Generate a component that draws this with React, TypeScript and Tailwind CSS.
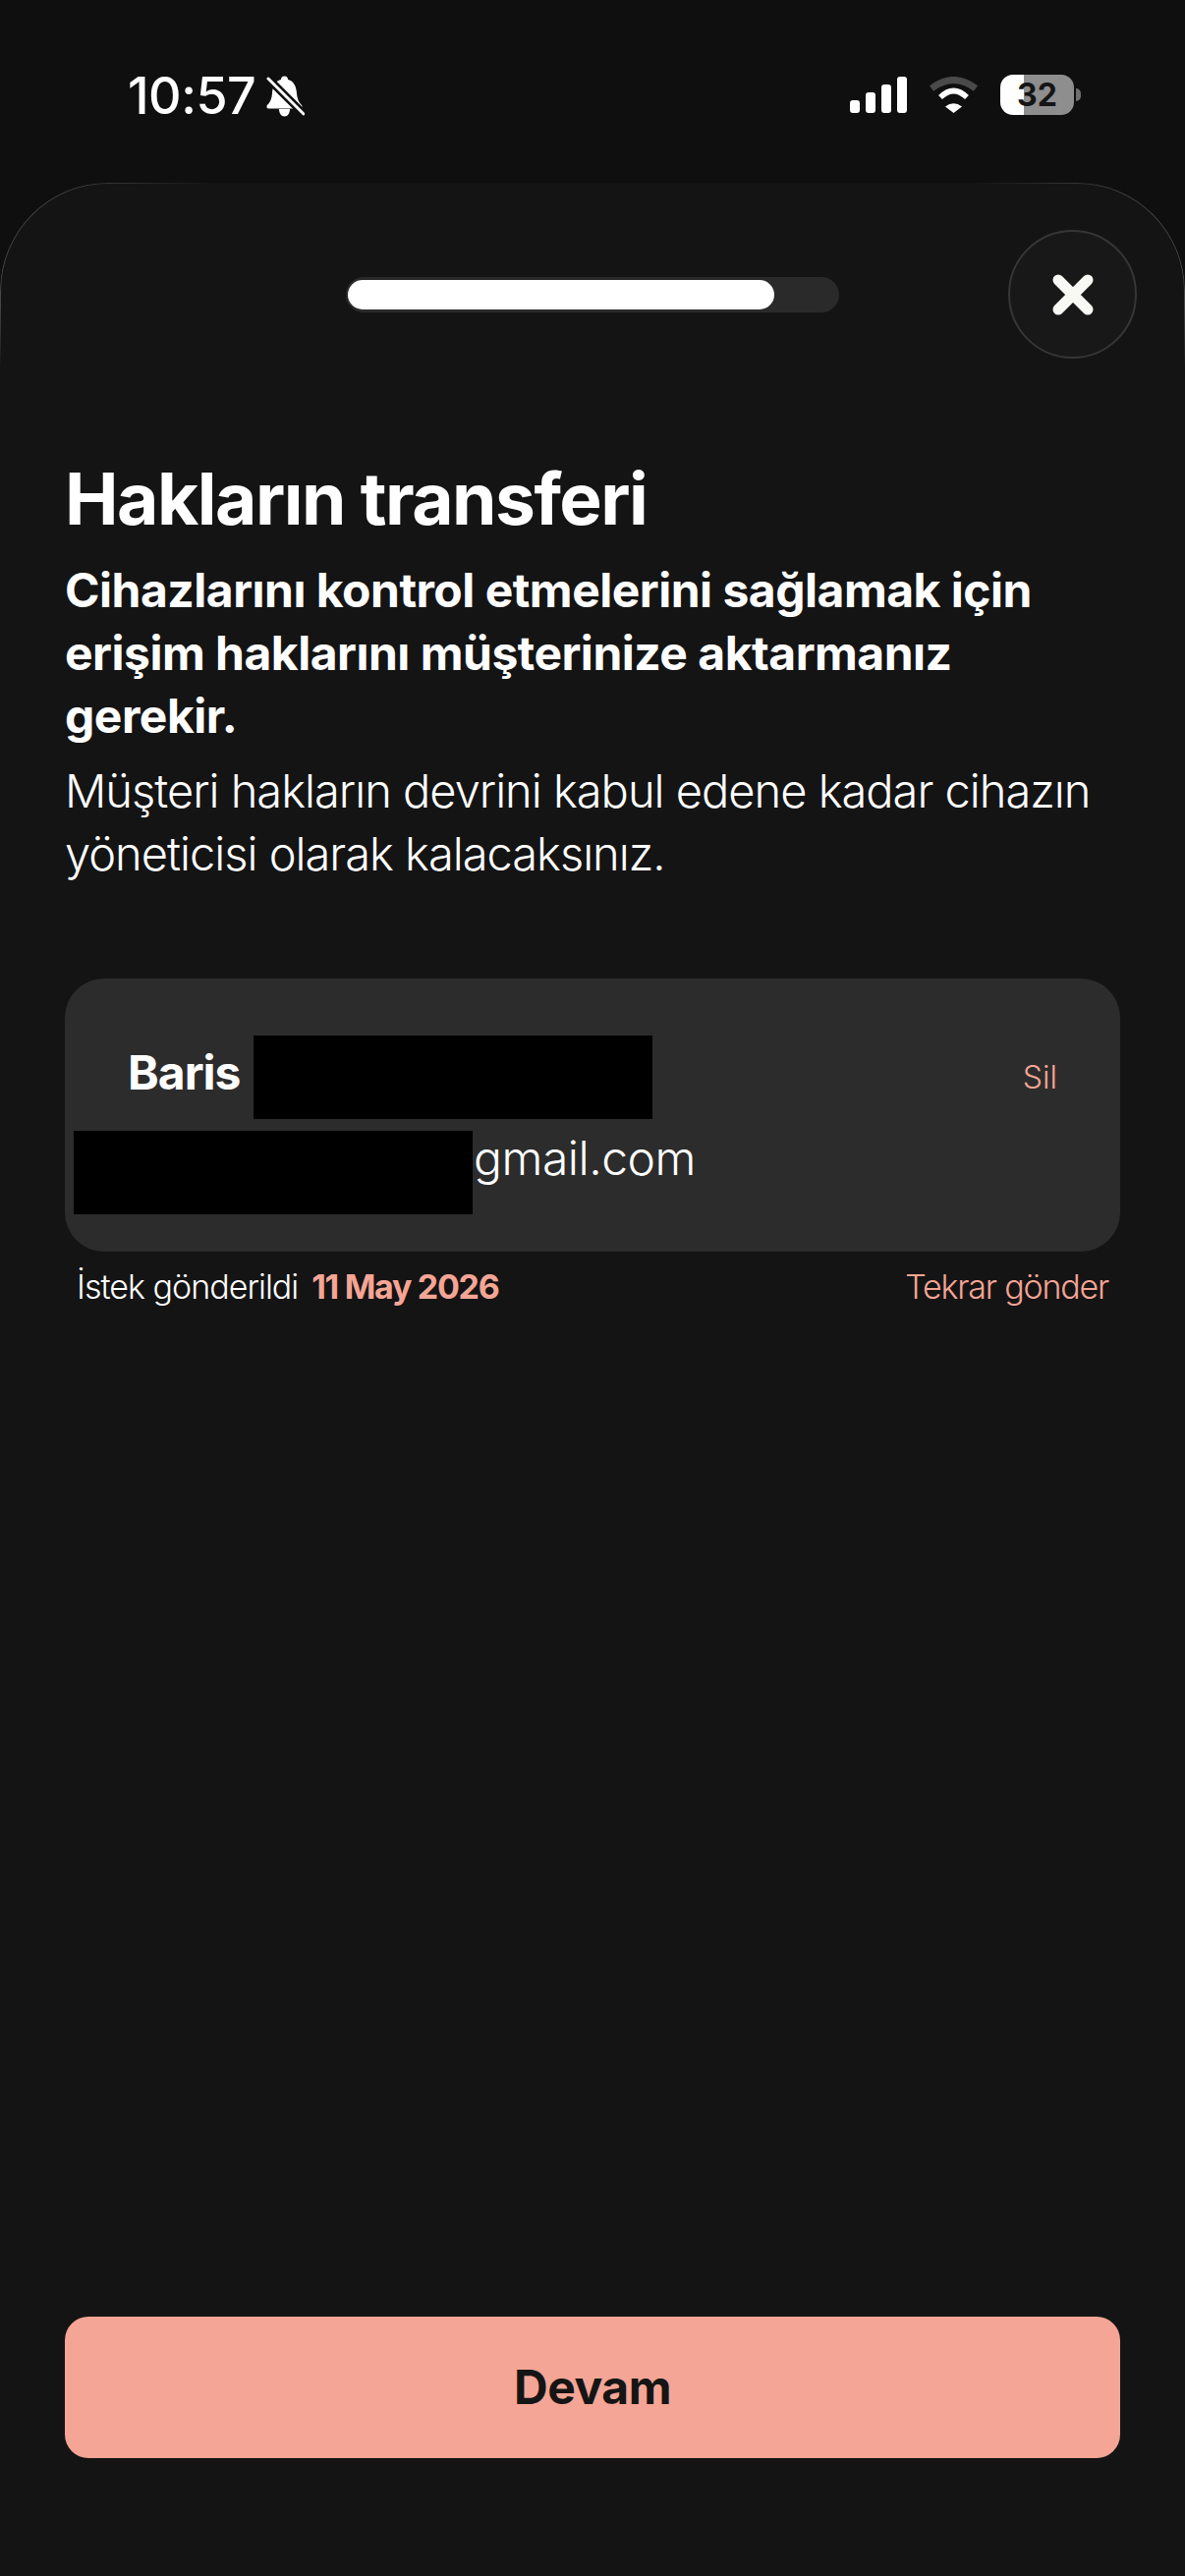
function BellOff() {
  return (
    <svg width="40" height="42" viewBox="0 0 40 42" fill="none">
      <path
        d="M19.5 0.5c2.2 0 3.6 1.6 3.6 3.6C29 5.6 31.5 11 32 18c.4 5.500 2 9 5 12 1.200 1.300.6 3.500-1.500 3.500H3.500C1.400 33.500.8 31.300 2 30c3-3 4.600-6.500 5-12 .5-7 3-12.400 8.900-13.900 0-2 1.400-3.600 3.600-3.600z"
        fill="#fff"
      />
      <path d="M14 34h11c0 4-2 7.500-5.500 7.500S14 38 14 34z" fill="#fff" />
      <path d="M1 1l38 38" stroke="#0f0f0f" strokeWidth="8" />
      <path d="M3 3l36 36" stroke="#fff" strokeWidth="3" strokeLinecap="round" />
    </svg>
  );
}

function SignalBars() {
  return (
    <svg width="58" height="37" viewBox="0 0 58 37" fill="#fff">
      <rect x="0" y="24" width="10" height="13" rx="3" />
      <rect x="16" y="16" width="10" height="21" rx="3" />
      <rect x="32" y="8" width="10" height="29" rx="3" />
      <rect x="48" y="0" width="10" height="37" rx="3" />
    </svg>
  );
}

function Wifi() {
  return (
    <svg width="51" height="37" viewBox="0 0 51 37" fill="none">
      <path d="M3 12Q25.500 -5 48 12" stroke="#4a4a4a" strokeWidth="7" />
      <path d="M12 21Q25.500 8 39 21" stroke="#fff" strokeWidth="5.500" />
      <path d="M17 30.500Q25.500 24 34 30.500L25.500 37z" fill="#fff" />
    </svg>
  );
}

function Battery() {
  return (
    <div className="flex items-center gap-[2px]">
      <div className="flex h-[41px] w-[75px] items-center justify-center rounded-[13px] bg-[linear-gradient(to_right,#ffffff_32%,#8e8e8e_32%)]">
        <span className="font-['Inter',sans-serif] text-[32px] leading-none font-bold text-[#151515]">32</span>
      </div>
      <div className="h-[13px] w-[5px] rounded-r-full bg-[#6f6f6f]" />
    </div>
  );
}

export default function App() {
  return (
    <div className="flex h-[2622px] w-[1206px] flex-col overflow-hidden bg-[#0f0f0f] font-['Inter',sans-serif] text-white">
      {/* status bar */}
      <div className="flex h-[186px] shrink-0 items-start justify-between pt-[76px] pr-[106px] pl-[130px]">
        <div className="flex items-center gap-[10px]">
          <span className="text-[52px] leading-[44px] font-medium tracking-[-0.5px]">10:57</span>
          <BellOff />
        </div>
        <div className="flex items-center gap-[22px]">
          <SignalBars />
          <Wifi />
          <Battery />
        </div>
      </div>

      {/* sheet */}
      <div className="relative flex flex-1 flex-col rounded-t-[110px] bg-[#141414] px-[66px] pb-[120px]">
        <div className="pointer-events-none absolute inset-x-0 top-0 h-[190px] rounded-t-[110px] border border-b-0 border-[#484848] [mask-composite:intersect] [mask-image:linear-gradient(to_bottom,black_65%,transparent),linear-gradient(to_right,black_4%,transparent_18%,transparent_82%,black_96%)]" />

        {/* top bar */}
        <div className="relative mt-[48px] flex h-[131px] items-center justify-center">
          <div className="h-[36px] w-[502px] rounded-full bg-[#2a2a2a] py-[3px] pl-[2px]">
            <div className="h-[30px] w-[434px] rounded-full bg-white" />
          </div>
          <button className="absolute top-0 right-[-17px] flex h-[131px] w-[131px] items-center justify-center rounded-full border-2 border-[#363636] bg-[#181818]">
            <svg width="42" height="42" viewBox="0 0 42 42" fill="none">
              <path d="M6 6l30 30M36 6L6 36" stroke="#f8f8f5" strokeWidth="11" strokeLinecap="round" />
            </svg>
          </button>
        </div>

        {/* heading */}
        <h1 className="mt-[101px] text-[73px] leading-[84px] font-bold tracking-[-1.5px]">Hakların transferi</h1>
        <p className="mt-[19px] text-[48px] leading-[64px] font-bold tracking-[-0.5px]">
          Cihazlarını kontrol etmelerini sağlamak için erişim haklarını müşterinize aktarmanız gerekir.
        </p>
        <p className="mt-[12px] text-[47px] leading-[64px] font-light tracking-[-1px]">
          Müşteri hakların devrini kabul edene kadar cihazın yöneticisi olarak kalacaksınız.
        </p>

        {/* user card */}
        <div className="mt-[95px] h-[278px] rounded-[40px] bg-[#2c2c2c] pt-[58px] pr-[64px] pl-[64px]">
          <div className="flex h-[85px] items-center">
            <span className="mb-[10px] text-[48px] font-bold tracking-[-1px]">Baris</span>
            <div className="ml-[14px] h-[85px] w-[406px] bg-black" />
            <button className="ml-auto text-[32px] font-light text-[#f4a595]">Sil</button>
          </div>
          <div className="mt-[12px] flex h-[85px] items-center">
            <div className="relative z-10 ml-[-55px] h-[85px] w-[406px] shrink-0 bg-black" />
            <span className="mb-[30px] ml-[-45px] text-[48px] font-light tracking-[-0.5px]">@gmail.com</span>
          </div>
        </div>

        {/* request info */}
        <div className="mt-[14px] flex items-center justify-between px-[12px] text-[34px] leading-[44px] tracking-[-1px]">
          <div className="flex items-center gap-[14px]">
            <span className="font-light">İstek gönderildi</span>
            <span className="font-bold tracking-[-1.3px] text-[#f4a595]">11 May 2026</span>
          </div>
          <button className="font-light tracking-[-1.2px] text-[#f4a595]">Tekrar gönder</button>
        </div>

        {/* footer button */}
        <button className="mt-auto flex h-[144px] items-center justify-center rounded-[24px] bg-[#f5a595] text-[48px] font-bold tracking-[-0.5px] text-[#151515]">
          Devam
        </button>
      </div>
    </div>
  );
}
